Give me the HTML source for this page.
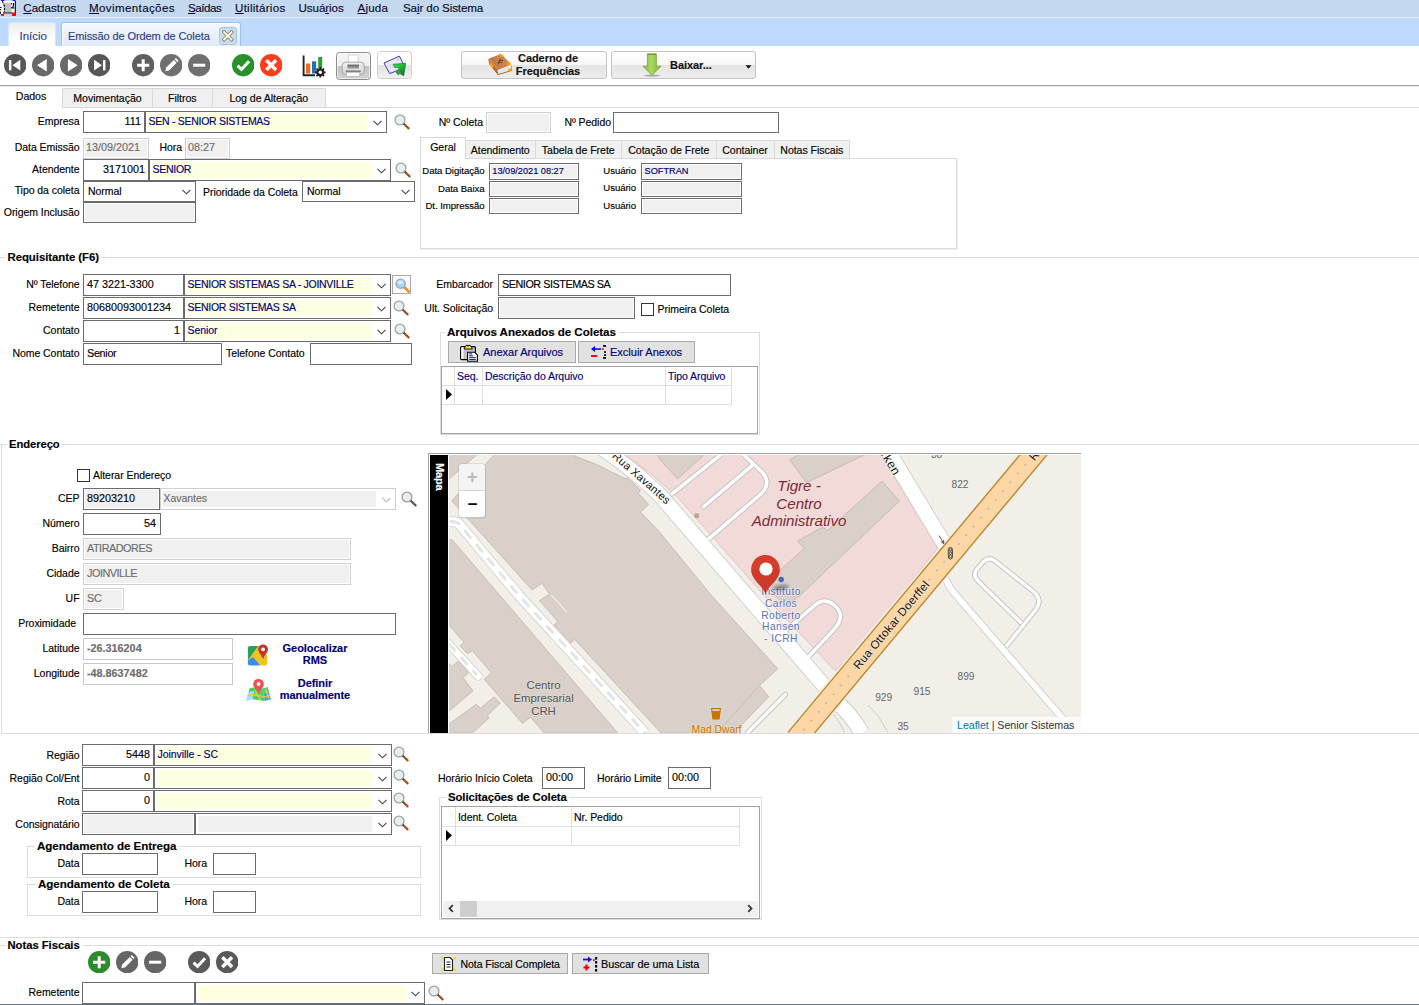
<!DOCTYPE html><html lang="pt-BR"><head><meta charset="utf-8"><title>Emissão de Ordem de Coleta</title><style>
*{box-sizing:border-box;margin:0;padding:0}
html,body{width:1419px;height:1005px;overflow:hidden;background:#fff}
body{position:relative;font-family:"Liberation Sans",sans-serif;font-size:10.5px;letter-spacing:-0.05px;-webkit-text-stroke:0.15px;color:#000;line-height:1}
.a{position:absolute;white-space:nowrap}
.l{position:absolute;white-space:nowrap;text-align:right;height:14px;line-height:14px}
.ll{position:absolute;white-space:nowrap;text-align:left;height:14px;line-height:14px}
.f{position:absolute;border:1px solid #6b6b6b;background:#fff;white-space:nowrap;overflow:hidden;padding:0 3px;font-size:10.8px;letter-spacing:0}
.f.d{border-color:#cfcfcf;background:#f0f0f0;color:#6d6d6d;box-shadow:inset 0 0 0 1px #fff}
.f.dd{background:#f0f0f0;box-shadow:inset 0 0 0 1px #fff}
.f.w{border-color:#c8c8c8;background:#fff;color:#6d6d6d;font-weight:bold}
.f.r{text-align:right}
.f.t{letter-spacing:-0.3px}
.cb{position:absolute;border:1px solid #6b6b6b;background:#fff;white-space:nowrap;overflow:hidden;font-size:10.5px;letter-spacing:-0.28px;color:#00007a}
.cb.lc{letter-spacing:-0.05px}
.cb .y{position:absolute;left:2px;top:2px;bottom:2px;right:19px;background:#ffffe1;padding-left:0.5px}
.cb.g{border-color:#cfcfcf}
.cb.g .y{background:#f0f0f0;color:#6d6d6d}
.cb.gd .y{background:#f0f0f0}
.cb.p .y{background:#fff;color:#000;padding-left:2px;padding-top:1px}
.cb svg{position:absolute;right:3.6px;width:9px;height:6px}
.b{font-weight:bold}
.hl{position:absolute;height:1px;background:#dcdcdc}
.vl{position:absolute;width:1px;background:#dcdcdc}
.gt{position:absolute;background:#fff;font-weight:bold;font-size:11px;padding:0 2px;height:6px;line-height:6px;white-space:nowrap}
.box{position:absolute;border:1px solid #dcdcdc}
.tab{position:absolute;background:#f0f0f0;border:1px solid #d9d9d9;text-align:center;white-space:nowrap}
.btn{position:absolute;background:#e1e1e1;border:1px solid #a8a8a8;white-space:nowrap}
.circ{position:absolute;width:22px;height:22px;border-radius:50%}
.chk{position:absolute;width:13px;height:13px;border:1px solid #333;background:#fff}
.nv{color:#00007a}
</style></head><body>
<div class="a" style="left:0;top:0;width:1419px;height:17px;background:#c4d9f0"></div>
<div class="a" style="left:0;top:17px;width:1419px;height:1px;background:#ebeef2"></div>
<div class="a" style="left:0;top:18px;width:1419px;height:28px;background:#bedaff"></div>
<svg class="a" style="left:0;top:0" width="17" height="17" viewBox="0 0 17 17"><rect x="0" y="1" width="15.6" height="13" fill="#fff"/><rect x="3.6" y="2.8" width="8" height="10" fill="#c0c0c0"/><path d="M15.3 1 V13.2 M3 13 H12.4 M0.3 11.5 V14" stroke="#000" stroke-width="1.1" fill="none"/><path d="M2.4 1.2 L3.4 3.5 L4.6 6.8 L4.4 12.2" stroke="#000" stroke-width="1.1" stroke-dasharray="2.2 1.3" fill="none"/><path d="M11.5 3.2 L11.6 11" stroke="#000" stroke-width="1" stroke-dasharray="1.1 2.9" fill="none"/><path d="M13.4 3 V5.4 L12.6 8 H14.5" stroke="#000" stroke-width="1.1" fill="none"/><path d="M0 7.4 H1.6 M0 9.6 H1.3" stroke="#000" stroke-width="1" fill="none"/><rect x="12" y="12.6" width="4" height="3.4" fill="#f00"/><rect x="1" y="14" width="3" height="1.8" fill="#f00"/><rect x="1" y="0" width="3.4" height="0.9" fill="#00f"/><rect x="12.6" y="0" width="3" height="0.9" fill="#00f"/></svg>
<div class="a" style="left:23.3px;top:1px;height:14px;line-height:14px;font-size:11.6px;letter-spacing:0px;color:#0a0a2a"><u>C</u>adastros</div>
<div class="a" style="left:89px;top:1px;height:14px;line-height:14px;font-size:11.6px;letter-spacing:0.36px;color:#0a0a2a"><u>M</u>ovimentações</div>
<div class="a" style="left:188px;top:1px;height:14px;line-height:14px;font-size:11.6px;letter-spacing:-0.48px;color:#0a0a2a"><u>S</u>aídas</div>
<div class="a" style="left:235px;top:1px;height:14px;line-height:14px;font-size:11.6px;letter-spacing:0.25px;color:#0a0a2a"><u>U</u>tilitários</div>
<div class="a" style="left:298.5px;top:1px;height:14px;line-height:14px;font-size:11.6px;letter-spacing:-0.08px;color:#0a0a2a">Usuá<u>r</u>ios</div>
<div class="a" style="left:357.5px;top:1px;height:14px;line-height:14px;font-size:11.6px;letter-spacing:0.2px;color:#0a0a2a"><u>A</u>juda</div>
<div class="a" style="left:403px;top:1px;height:14px;line-height:14px;font-size:11.6px;letter-spacing:-0.11px;color:#0a0a2a">Sa<u>i</u>r do Sistema</div>
<div class="a" style="left:8px;top:22px;width:48px;height:24px;border-radius:3px 3px 0 0;background:linear-gradient(#ececec,#fff 70%);border:1px solid #cfe6ff;border-bottom:none"></div>
<div class="a" style="left:19.5px;top:29px;font-size:11.6px;color:#2d3f8e;height:14px;line-height:14px">Início</div>
<div class="a" style="left:60.5px;top:22px;width:180px;height:24px;border-radius:3px 3px 0 0;background:linear-gradient(#f4f8fd,#dfe9f7);border:1px solid #9dbfee;border-bottom:none;box-shadow:inset 1px 1px 0 #fff"></div>
<div class="a" style="left:68px;top:29px;font-size:11px;color:#2d3f8e;height:14px;line-height:14px;letter-spacing:-0.1px">Emissão de Ordem de Coleta</div>
<div class="a" style="left:219px;top:27px;width:17.5px;height:18px;border-radius:3px;background:#cadcf4;border:1px solid #a9c4ea"></div>
<svg class="a" style="left:222px;top:30px" width="12" height="12" viewBox="0 0 12 12"><path d="M2 2 L9.6 9.6 M9.6 2 L2 9.6" stroke="#7a6a2a" stroke-width="3.3" stroke-linecap="square"/><path d="M2 2 L9.6 9.6 M9.6 2 L2 9.6" stroke="#fff" stroke-width="1.9" stroke-linecap="square"/></svg>
<svg class="a" style="left:3.8px;top:54.2px" width="22.4" height="22.4" viewBox="0 0 24 24"><circle cx="12" cy="12" r="12" fill="#575757"/><rect x="5.3" y="6.5" width="2.6" height="11" fill="#fff"/><path d="M17.5 6.2 L9 12 L17.5 17.8 Z" fill="#fff"/></svg>
<svg class="a" style="left:31.7px;top:54.2px" width="22.4" height="22.4" viewBox="0 0 24 24"><circle cx="12" cy="12" r="12" fill="#696969"/><path d="M15.8 5.3 L5.4 12 L15.8 18.7 Z" fill="#fff"/></svg>
<svg class="a" style="left:59.5px;top:54.2px" width="22.4" height="22.4" viewBox="0 0 24 24"><circle cx="12" cy="12" r="12" fill="#696969"/><path d="M8.5 5.3 L18.9 12 L8.5 18.7 Z" fill="#fff"/></svg>
<svg class="a" style="left:87.6px;top:54.2px" width="22.4" height="22.4" viewBox="0 0 24 24"><circle cx="12" cy="12" r="12" fill="#575757"/><rect x="16.1" y="6.5" width="2.6" height="11" fill="#fff"/><path d="M6.5 6.2 L15 12 L6.5 17.8 Z" fill="#fff"/></svg>
<svg class="a" style="left:131.6px;top:54.2px" width="22.4" height="22.4" viewBox="0 0 24 24"><circle cx="12" cy="12" r="12" fill="#5f5f5f"/><path d="M12 5.5 V18.5 M5.5 12 H18.5" stroke="#fff" stroke-width="3.2"/></svg>
<svg class="a" style="left:159.8px;top:54.2px" width="22.4" height="22.4" viewBox="0 0 24 24"><circle cx="12" cy="12" r="12" fill="#707070"/><path d="M5.6 18.6 L6.6 14.6 L14.9 6.3 L17.9 9.3 L9.6 17.6 Z" fill="#fff"/><path d="M15.7 5.5 L17 4.2 L20 7.2 L18.7 8.5 Z" fill="#fff"/></svg>
<svg class="a" style="left:187.7px;top:54.2px" width="22.4" height="22.4" viewBox="0 0 24 24"><circle cx="12" cy="12" r="12" fill="#707070"/><path d="M5.5 12 H18.5" stroke="#fff" stroke-width="3.2"/></svg>
<svg class="a" style="left:231.8px;top:54.2px" width="22.4" height="22.4" viewBox="0 0 24 24"><circle cx="12" cy="12" r="12" fill="#28922a"/><path d="M6 12.5 L10.2 16.5 L18.3 7.8" fill="none" stroke="#fff" stroke-width="3.2"/></svg>
<svg class="a" style="left:259.8px;top:54.2px" width="22.4" height="22.4" viewBox="0 0 24 24"><circle cx="12" cy="12" r="12" fill="#ff3c1c"/><path d="M6.8 6.8 L17.2 17.2 M17.2 6.8 L6.8 17.2" stroke="#fff" stroke-width="3.8"/></svg>
<svg class="a" style="left:302px;top:55px" width="25" height="23" viewBox="0 0 25 23"><path d="M1.6 0.5 V20.3 H13" fill="none" stroke="#262626" stroke-width="1.9"/><rect x="4" y="8.5" width="4.2" height="10" fill="#f26a1b"/><rect x="10" y="6.3" width="4.2" height="12.2" fill="#2a6ebb"/><rect x="16.2" y="2" width="4" height="12" fill="#2e9a3a"/><circle cx="18.3" cy="17.3" r="4.6" fill="#fff"/><circle cx="18.3" cy="17.3" r="3" fill="none" stroke="#222" stroke-width="2.2"/><g stroke="#222" stroke-width="1.7"><path d="M18.3 12 V22.6 M13 17.3 H23.6 M14.5 13.5 L22.1 21.1 M22.1 13.5 L14.5 21.1"/></g><circle cx="18.3" cy="17.3" r="1.7" fill="#fff"/></svg>
<div class="a" style="left:336px;top:52px;width:35px;height:28px;border:1px solid #8c8c8c;border-radius:3.5px;background:linear-gradient(#f4f4f4 0,#efefef 49%,#c4c4c4 51%,#d2d2d2 100%);box-shadow:inset 0 0 0 1px rgba(255,255,255,.55)"></div>
<svg class="a" style="left:340px;top:53px" width="27" height="26" viewBox="340 53 27 26"><defs><linearGradient id="gp" x1="0" x2="0" y1="0" y2="1"><stop offset="0" stop-color="#5e5e5e"/><stop offset="1" stop-color="#b5b5b5"/></linearGradient><linearGradient id="gb" x1="0" x2="0" y1="0" y2="1"><stop offset="0" stop-color="#f4f4f4"/><stop offset="1" stop-color="#d6d6d6"/></linearGradient></defs><rect x="348.3" y="55" width="9.8" height="10" fill="#fdfdfd" stroke="#c4c4c4" stroke-width=".7"/><rect x="342.2" y="62.2" width="22" height="12.2" rx="3.2" fill="url(#gb)" stroke="#9b9b9b" stroke-width=".9" opacity=".93"/><rect x="347.4" y="64.6" width="11.6" height="4.2" fill="url(#gp)"/><rect x="345.8" y="70.6" width="15" height="1.1" fill="#555"/><rect x="346.6" y="72.3" width="13.2" height="4.3" fill="#fbfbfb" stroke="#b0b0b0" stroke-width=".7"/><circle cx="362" cy="65" r=".6" fill="#8fbf6a"/></svg>
<div class="a" style="left:377px;top:51px;width:35px;height:28px;border:1px solid #cfcfcf;border-radius:3.5px;background:linear-gradient(#fff 0,#fafafa 49%,#e2e2e2 51%,#f0f0f0 100%)"></div>
<svg class="a" style="left:381px;top:53px" width="28" height="26" viewBox="381 53 28 26"><defs><linearGradient id="gs" x1="0" x2="1" y1="0" y2="1"><stop offset="0" stop-color="#3fe05a"/><stop offset=".55" stop-color="#1fae35"/><stop offset="1" stop-color="#0a5e18"/></linearGradient></defs><path d="M384 63 L399.4 56.1 L405 67.4 L389.7 73.6 Z" fill="#e9e9fb" stroke="#3b3bc4" stroke-width="1"/><circle cx="391.5" cy="66" r="1.7" fill="none" stroke="#c9c9d6" stroke-width=".7"/><rect x="397.3" y="58.6" width="1.6" height="1.6" fill="#b8c83a" transform="rotate(-24 398 59.4)"/><path d="M393.2 64.2 L405.7 63.3 L403.7 75.8 L400.4 73.9 L401.2 69.6 L398.6 74.9 L396 72.4 L399.8 67.6 L394.6 67.6 Z" fill="url(#gs)" stroke="#0b6a1c" stroke-width=".6" stroke-linejoin="round"/></svg>
<div class="a" style="left:461px;top:51px;width:145.5px;height:28px;border:1px solid #c4c4c4;border-radius:3px;background:linear-gradient(#fff 0,#f7f7f7 48%,#e4e4e4 52%,#ededed 100%)"></div>
<div class="a" style="left:611px;top:51px;width:145px;height:28px;border:1px solid #c4c4c4;border-radius:3px;background:linear-gradient(#fff 0,#f7f7f7 48%,#e4e4e4 52%,#ededed 100%)"></div>
<div class="a b" style="left:508px;top:51.5px;width:80px;text-align:center;font-size:11px;line-height:13.8px;color:#111;white-space:normal">Caderno de Frequências</div>
<svg class="a" style="left:486px;top:52px" width="28" height="25" viewBox="486 52 28 25"><path d="M489.6 64.3 L498 74.9 L511.8 70.9 L511.2 64.5 Z" fill="#a25f2e"/><path d="M497.3 70 L510.8 64.6 L511.3 70.2 L498.2 74 Z" fill="#f4f4f4"/><path d="M497.6 71.6 L511 66.6 M497.9 72.9 L511.2 68.4" stroke="#cfcfcf" stroke-width=".6"/><path d="M488.2 60.1 L496.9 69.7 L498 74.5 L489.4 64.6 Z" fill="#b06a38"/><path d="M488.2 60.1 Q488 59 489.2 58.6 L500 54.3 Q501 54 501.8 54.8 L511 64.1 L496.9 69.9 Z" fill="#c98250"/><path d="M490.5 58.2 L499.2 67.7 M492 57.6 L500.7 67.1" stroke="#a8653a" stroke-width=".6"/><path d="M498.4 54.8 L500.4 54.2 Q501.3 54 502 54.8 L504 56.9 Q501 57.5 498.4 54.8 Z" fill="#ff9a00"/><path d="M507.8 61 L511.2 64.2 L507 66 Q505.5 63 507.8 61 Z" fill="#ff9a00"/><path d="M490.3 62.3 L493.3 65.8 L492.6 68.4 L490 65.3 Z" fill="#ffa61a"/><path d="M508 69.6 L511.4 68 L511.8 70.8 L508.6 71.9 Z" fill="#ff9a00"/><text x="500.3" y="64.6" font-size="7.4" font-weight="bold" fill="#5e3114" text-anchor="middle" transform="rotate(22 500.3 62)" font-family="Liberation Sans, sans-serif">F</text></svg>
<div class="a b" style="left:670px;top:58px;font-size:11px;color:#111;height:14px;line-height:14px">Baixar...</div>
<svg class="a" style="left:640px;top:52px" width="24" height="26" viewBox="640 52 24 26"><defs><linearGradient id="ga" x1="0" x2="1" y1="0" y2="0"><stop offset="0" stop-color="#86bb35"/><stop offset=".45" stop-color="#a9d864"/><stop offset="1" stop-color="#7fb52d"/></linearGradient></defs><ellipse cx="652" cy="75.6" rx="8" ry="1" fill="#8a8a8a" opacity=".7"/><path d="M647.4 54 H656.4 V66.2 H661 L652 75.3 L643 66.2 H647.4 Z" fill="url(#ga)" stroke="#6f9f2a" stroke-width=".7"/><path d="M647.4 54.2 H656.4" stroke="#5d8a22" stroke-width="1"/></svg>
<svg class="a" style="left:744.5px;top:65px" width="7" height="4" viewBox="0 0 7 4"><path d="M0.5 0.3 H6.5 L3.5 3.7 Z" fill="#111"/></svg>
<div class="hl" style="left:0px;top:85px;width:1419px;background:#a3a3a3"></div>
<div class="hl" style="left:0px;top:86px;width:1419px;background:#e9e9e9"></div>
<div class="hl" style="left:62px;top:107px;width:1357px;background:#d9d9d9"></div>
<div class="tab" style="left:62px;top:88px;width:91px;height:20px;line-height:19px;font-size:10.6px">Movimentação</div>
<div class="tab" style="left:152px;top:88px;width:60.5px;height:20px;line-height:19px;font-size:10.6px">Filtros</div>
<div class="tab" style="left:211.5px;top:88px;width:114.5px;height:20px;line-height:19px;font-size:10.6px">Log de Alteração</div>
<div class="a" style="left:0;top:86px;width:62px;height:22px;text-align:center;line-height:21px;font-size:10.6px">Dados</div>
<div class="l " style="right:1339.5px;top:114.4px;">Empresa</div>
<div class="f r" style="left:83.0px;top:111.0px;width:62.0px;height:22.0px;line-height:18.0px;">111</div>
<div class="cb " style="left:145.0px;top:111.0px;width:242.0px;height:22.0px"><div class="y" style="line-height:14.8px">SEN - SENIOR SISTEMAS</div><svg viewBox="0 0 9 6" style="top:7.5px"><path d="M0.5 0.8 L4.5 4.8 L8.5 0.8" fill="none" stroke="#444" stroke-width="1.1"/></svg></div>
<svg class="a" style="left:394.0px;top:113.5px" width="17.0" height="17.0" viewBox="0 0 17 17"><line x1="9.5" y1="9.5" x2="14.6" y2="14.4" stroke="#a0521e" stroke-width="2.2" stroke-linecap="round"/><line x1="8.6" y1="8.6" x2="10.4" y2="10.4" stroke="#3a2a20" stroke-width="2"/><circle cx="6" cy="6" r="4.9" fill="#e9eded" stroke="#98a6a6" stroke-width="1.3"/></svg>
<div class="l " style="right:1339.5px;top:140.4px;">Data Emissão</div>
<div class="f d" style="left:83.0px;top:138.0px;width:66.0px;height:21.0px;line-height:17.0px;padding:0 2px">13/09/2021</div>
<div class="ll " style="left:159.5px;top:140.4px;">Hora</div>
<div class="f d" style="left:185.0px;top:138.0px;width:45.0px;height:21.0px;line-height:17.0px;padding:0 2px">08:27</div>
<div class="l " style="right:1339.5px;top:162.4px;">Atendente</div>
<div class="f r" style="left:83.0px;top:159.0px;width:66.0px;height:22.0px;line-height:18.0px;">3171001</div>
<div class="cb " style="left:149.0px;top:159.0px;width:242.0px;height:22.0px"><div class="y" style="line-height:14.8px">SENIOR</div><svg viewBox="0 0 9 6" style="top:7.5px"><path d="M0.5 0.8 L4.5 4.8 L8.5 0.8" fill="none" stroke="#444" stroke-width="1.1"/></svg></div>
<svg class="a" style="left:395.0px;top:161.5px" width="17.0" height="17.0" viewBox="0 0 17 17"><line x1="9.5" y1="9.5" x2="14.6" y2="14.4" stroke="#a0521e" stroke-width="2.2" stroke-linecap="round"/><line x1="8.6" y1="8.6" x2="10.4" y2="10.4" stroke="#3a2a20" stroke-width="2"/><circle cx="6" cy="6" r="4.9" fill="#e9eded" stroke="#98a6a6" stroke-width="1.3"/></svg>
<div class="l " style="right:1339.5px;top:182.9px;">Tipo da coleta</div>
<div class="cb p lc" style="left:83.0px;top:181.0px;width:113.0px;height:21.0px"><div class="y" style="line-height:13.8px">Normal</div><svg viewBox="0 0 9 6" style="top:7.0px"><path d="M0.5 0.8 L4.5 4.8 L8.5 0.8" fill="none" stroke="#444" stroke-width="1.1"/></svg></div>
<div class="ll " style="left:203.0px;top:185.4px;">Prioridade da Coleta</div>
<div class="cb p lc" style="left:302.0px;top:181.0px;width:113.0px;height:21.0px"><div class="y" style="line-height:13.8px">Normal</div><svg viewBox="0 0 9 6" style="top:7.0px"><path d="M0.5 0.8 L4.5 4.8 L8.5 0.8" fill="none" stroke="#444" stroke-width="1.1"/></svg></div>
<div class="l " style="right:1339.5px;top:204.9px;">Origem Inclusão</div>
<div class="f dd" style="left:83.0px;top:202.0px;width:113.0px;height:21.0px;line-height:17.0px;"></div>
<div class="l " style="right:936.0px;top:115.4px;">Nº Coleta</div>
<div class="f d" style="left:486.0px;top:112.0px;width:65.0px;height:21.0px;line-height:17.0px;"></div>
<div class="l " style="right:808.0px;top:115.4px;">Nº Pedido</div>
<div class="f " style="left:613.0px;top:112.0px;width:166.0px;height:21.0px;line-height:17.0px;"></div>
<div class="box" style="left:420px;top:158px;width:536.5px;height:90.5px;border-color:#dcdcdc;box-shadow:1px 1px 0 #f0f0f0"></div>
<div class="tab" style="left:465px;top:139.5px;width:70.5px;height:19.5px;line-height:18.5px;font-size:10.6px">Atendimento</div>
<div class="tab" style="left:534.5px;top:139.5px;width:87.5px;height:19.5px;line-height:18.5px;font-size:10.6px">Tabela de Frete</div>
<div class="tab" style="left:621px;top:139.5px;width:95.5px;height:19.5px;line-height:18.5px;font-size:10.6px">Cotação de Frete</div>
<div class="tab" style="left:715.5px;top:139.5px;width:59.0px;height:19.5px;line-height:18.5px;font-size:10.6px">Container</div>
<div class="tab" style="left:773.5px;top:139.5px;width:76.5px;height:19.5px;line-height:18.5px;font-size:10.6px">Notas Fiscais</div>
<div class="a" style="left:420px;top:137px;width:46px;height:22px;background:#fff;border:1px solid #d9d9d9;border-bottom:none;text-align:center;line-height:19px;font-size:10.6px">Geral</div>
<div class="l " style="right:934.5px;top:164.2px;font-size:9.6px">Data Digitação</div>
<div class="f dd nv" style="left:489.3px;top:163.0px;width:89.7px;height:16.5px;line-height:12.5px;font-size:9.2px;padding:0 2px;line-height:14.9px;">13/09/2021 08:27</div>
<div class="l " style="right:783.0px;top:163.7px;font-size:9.6px">Usuário</div>
<div class="f dd nv" style="left:641.0px;top:163.0px;width:101.0px;height:16.5px;line-height:12.5px;font-size:9.2px;padding:0 2.5px;line-height:14.9px;">SOFTRAN</div>
<div class="l " style="right:934.5px;top:181.8px;font-size:9.6px">Data Baixa</div>
<div class="f dd nv" style="left:489.3px;top:181.0px;width:89.7px;height:15.5px;line-height:11.5px;font-size:9.2px;padding:0 2px;line-height:13.9px;"></div>
<div class="l " style="right:783.0px;top:181.2px;font-size:9.6px">Usuário</div>
<div class="f dd nv" style="left:641.0px;top:181.0px;width:101.0px;height:15.5px;line-height:11.5px;font-size:9.2px;padding:0 2.5px;line-height:13.9px;"></div>
<div class="l " style="right:934.5px;top:199.4px;font-size:9.6px">Dt. Impressão</div>
<div class="f dd nv" style="left:489.3px;top:198.3px;width:89.7px;height:16.2px;line-height:12.2px;font-size:9.2px;padding:0 2px;line-height:14.6px;"></div>
<div class="l " style="right:783.0px;top:198.8px;font-size:9.6px">Usuário</div>
<div class="f dd nv" style="left:641.0px;top:198.3px;width:101.0px;height:16.2px;line-height:12.2px;font-size:9.2px;padding:0 2.5px;line-height:14.6px;"></div>
<div class="hl" style="left:0px;top:257px;width:1419px;background:#dcdcdc"></div>
<div class="gt" style="left:5.5px;top:254.0px;font-size:11.4px">Requisitante (F6)</div>
<div class="l " style="right:1339.5px;top:277.4px;">Nº Telefone</div>
<div class="f " style="left:83.0px;top:274.0px;width:101.0px;height:22.0px;line-height:18.0px;">47 3221-3300</div>
<div class="cb " style="left:184.0px;top:274.0px;width:207.0px;height:22.0px"><div class="y" style="line-height:14.8px">SENIOR SISTEMAS SA - JOINVILLE</div><svg viewBox="0 0 9 6" style="top:7.5px"><path d="M0.5 0.8 L4.5 4.8 L8.5 0.8" fill="none" stroke="#444" stroke-width="1.1"/></svg></div>
<div class="l " style="right:1339.5px;top:300.4px;">Remetente</div>
<div class="f " style="left:83.0px;top:297.0px;width:101.0px;height:22.0px;line-height:18.0px;">80680093001234</div>
<div class="cb " style="left:184.0px;top:297.0px;width:207.0px;height:22.0px"><div class="y" style="line-height:14.8px">SENIOR SISTEMAS SA</div><svg viewBox="0 0 9 6" style="top:7.5px"><path d="M0.5 0.8 L4.5 4.8 L8.5 0.8" fill="none" stroke="#444" stroke-width="1.1"/></svg></div>
<div class="l " style="right:1339.5px;top:323.4px;">Contato</div>
<div class="f r" style="left:83.0px;top:320.0px;width:101.0px;height:22.0px;line-height:18.0px;">1</div>
<div class="cb lc" style="left:184.0px;top:320.0px;width:207.0px;height:22.0px"><div class="y" style="line-height:14.8px">Senior</div><svg viewBox="0 0 9 6" style="top:7.5px"><path d="M0.5 0.8 L4.5 4.8 L8.5 0.8" fill="none" stroke="#444" stroke-width="1.1"/></svg></div>
<div class="a" style="left:392px;top:275px;width:19px;height:19px;border:1px solid #a9a9a9;background:#fafafa"></div>
<svg class="a" style="left:394.5px;top:277.5px" width="16" height="16" viewBox="0 0 17 17"><line x1="9.5" y1="9.5" x2="14.4" y2="14.2" stroke="#d8452a" stroke-width="2.6" stroke-linecap="round"/><line x1="9.8" y1="9.8" x2="14.2" y2="14" stroke="#ffc21a" stroke-width="1.3" stroke-linecap="round"/><circle cx="6" cy="6" r="4.9" fill="#a9d4fb" stroke="#8e9aa8" stroke-width="1.2"/><ellipse cx="5.6" cy="4.6" rx="3" ry="2" fill="#d6ecff"/></svg>
<svg class="a" style="left:392.7px;top:300.0px" width="17.0" height="17.0" viewBox="0 0 17 17"><line x1="9.5" y1="9.5" x2="14.6" y2="14.4" stroke="#a0521e" stroke-width="2.2" stroke-linecap="round"/><line x1="8.6" y1="8.6" x2="10.4" y2="10.4" stroke="#3a2a20" stroke-width="2"/><circle cx="6" cy="6" r="4.9" fill="#e9eded" stroke="#98a6a6" stroke-width="1.3"/></svg>
<svg class="a" style="left:393.5px;top:323.0px" width="17.0" height="17.0" viewBox="0 0 17 17"><line x1="9.5" y1="9.5" x2="14.6" y2="14.4" stroke="#a0521e" stroke-width="2.2" stroke-linecap="round"/><line x1="8.6" y1="8.6" x2="10.4" y2="10.4" stroke="#3a2a20" stroke-width="2"/><circle cx="6" cy="6" r="4.9" fill="#e9eded" stroke="#98a6a6" stroke-width="1.3"/></svg>
<div class="l " style="right:1339.5px;top:345.9px;">Nome Contato</div>
<div class="f t" style="left:83.0px;top:343.0px;width:139.0px;height:22.0px;line-height:18.0px;">Senior</div>
<div class="ll " style="left:226.0px;top:345.9px;">Telefone Contato</div>
<div class="f " style="left:310.0px;top:343.0px;width:102.0px;height:22.0px;line-height:18.0px;"></div>
<div class="l " style="right:926.0px;top:277.4px;">Embarcador</div>
<div class="f t" style="left:498.0px;top:274.0px;width:233.0px;height:22.0px;line-height:18.0px;letter-spacing:-0.45px">SENIOR SISTEMAS SA</div>
<div class="l " style="right:926.0px;top:301.4px;">Ult. Solicitação</div>
<div class="f dd" style="left:498.0px;top:297.0px;width:137.0px;height:22.0px;line-height:18.0px;"></div>
<div class="chk" style="left:641px;top:303px"></div>
<div class="ll " style="left:657.5px;top:302.4px;">Primeira Coleta</div>
<div class="box" style="left:440px;top:332px;width:319.5px;height:102.5px"></div>
<div class="gt" style="left:445.0px;top:329.0px;font-size:11.6px">Arquivos Anexados de Coletas</div>
<div class="btn" style="left:448px;top:341px;width:127.5px;height:21.5px"></div>
<div class="btn" style="left:577.5px;top:341px;width:117px;height:21.5px"></div>
<div class="a nv" style="left:483px;top:345px;height:14px;line-height:14px;font-size:11.1px">Anexar Arquivos</div>
<div class="a nv" style="left:610px;top:345px;height:14px;line-height:14px;font-size:11.1px">Excluir Anexos</div>
<svg class="a" style="left:459px;top:343px" width="20" height="20" viewBox="459 343 20 20"><rect x="460.6" y="346.6" width="14.8" height="13" rx="1" fill="#c2c2c2" stroke="#000" stroke-width="1.1"/><rect x="461.3" y="347.4" width="2.2" height="11.4" fill="#fff"/><path d="M464 349 L466 345.4 H470.4 L472.4 349 Z" fill="#ffee00" stroke="#000" stroke-width=".9"/><rect x="467.2" y="346" width="1.8" height="1" fill="#8a8a8a"/><path d="M467.6 352.2 H474.6 L477.4 355 V361.3 H467.6 Z" fill="#fff" stroke="#000" stroke-width="1.1"/><path d="M469.2 353.9 H472 M469.2 355.8 H473 M469.2 357.7 H475.8 M469.2 359.6 H475.8" stroke="#0000ff" stroke-width="1"/></svg>
<svg class="a" style="left:590px;top:344px" width="18" height="17" viewBox="590 344 18 17"><path d="M591 349 L595 346.1 V351.9 Z" fill="#0000ff"/><rect x="593.5" y="348.3" width="7.6" height="1.5" fill="#0000ff"/><rect x="602" y="348.3" width="1.9" height="1.5" fill="#f00"/><rect x="591" y="355" width="6" height="2" fill="#f00"/><rect x="603" y="345.1" width="3" height="1.7" fill="#000"/><rect x="604.1" y="351.2" width="1.9" height="1.7" fill="#000"/><rect x="604.1" y="354.2" width="1.9" height="1.7" fill="#000"/><rect x="603" y="357.1" width="3" height="1.7" fill="#000"/></svg>
<div class="a" style="left:441px;top:366px;width:317px;height:68px;border:1px solid #a3a3a3;background:#fff"></div>
<div class="hl" style="left:442px;top:385px;width:290px;background:#dedede"></div>
<div class="hl" style="left:442px;top:404px;width:290px;background:#dedede"></div>
<div class="vl" style="left:454px;top:367px;height:38px;background:#dedede"></div>
<div class="vl" style="left:482px;top:367px;height:38px;background:#dedede"></div>
<div class="vl" style="left:665px;top:367px;height:38px;background:#dedede"></div>
<div class="vl" style="left:731px;top:367px;height:38px;background:#dedede"></div>
<div class="a nv" style="left:457px;top:368.6px;height:14px;line-height:14px">Seq.</div>
<div class="a nv" style="left:485px;top:368.6px;height:14px;line-height:14px">Descrição do Arquivo</div>
<div class="a nv" style="left:668px;top:368.6px;height:14px;line-height:14px">Tipo Arquivo</div>
<svg class="a" style="left:445.5px;top:389px" width="6" height="11" viewBox="0 0 6 11"><path d="M0 0 L6 5.5 L0 11 Z" fill="#000"/></svg>
<div class="hl" style="left:0px;top:444px;width:1419px;background:#dcdcdc"></div>
<div class="vl" style="left:1px;top:444px;height:290px;background:#dcdcdc"></div>
<div class="hl" style="left:1px;top:733px;width:1418px;background:#dcdcdc"></div>
<div class="gt" style="left:7.0px;top:441.0px;font-size:11.2px">Endereço</div>
<div class="chk" style="left:77px;top:469px"></div>
<div class="ll " style="left:93.0px;top:467.9px;">Alterar Endereço</div>
<div class="l " style="right:1339.5px;top:490.9px;">CEP</div>
<div class="f dd" style="left:83.0px;top:488.0px;width:77.0px;height:22.0px;line-height:18.0px;">89203210</div>
<div class="cb g lc" style="left:160.0px;top:488.0px;width:236.0px;height:22.0px"><div class="y" style="line-height:14.8px">Xavantes</div><svg viewBox="0 0 9 6" style="top:7.5px"><path d="M0.5 0.8 L4.5 4.8 L8.5 0.8" fill="none" stroke="#b4b4b4" stroke-width="1.1"/></svg></div>
<svg class="a" style="left:400.6px;top:490.8px" width="17.0" height="17.0" viewBox="0 0 17 17"><line x1="9.5" y1="9.5" x2="14.6" y2="14.4" stroke="#5a5a5a" stroke-width="2.2" stroke-linecap="round"/><line x1="8.6" y1="8.6" x2="10.4" y2="10.4" stroke="#3c3c3c" stroke-width="2"/><circle cx="6" cy="6" r="4.9" fill="#ededed" stroke="#9c9c9c" stroke-width="1.3"/></svg>
<div class="l " style="right:1339.5px;top:515.9px;">Número</div>
<div class="f r" style="left:83.0px;top:513.0px;width:78.0px;height:22.0px;line-height:18.0px;padding-right:4px">54</div>
<div class="l " style="right:1339.5px;top:540.9px;">Bairro</div>
<div class="f d t" style="left:83.0px;top:538.0px;width:268.0px;height:22.0px;line-height:18.0px;letter-spacing:-0.45px">ATIRADORES</div>
<div class="l " style="right:1339.5px;top:565.9px;">Cidade</div>
<div class="f d t" style="left:83.0px;top:563.0px;width:268.0px;height:22.0px;line-height:18.0px;letter-spacing:-0.45px">JOINVILLE</div>
<div class="l " style="right:1339.5px;top:590.9px;">UF</div>
<div class="f d t" style="left:83.0px;top:588.0px;width:41.0px;height:22.0px;line-height:18.0px;">SC</div>
<div class="l " style="right:1343.0px;top:615.9px;">Proximidade</div>
<div class="f " style="left:83.0px;top:613.0px;width:313.0px;height:22.0px;line-height:18.0px;"></div>
<div class="l " style="right:1339.5px;top:640.9px;">Latitude</div>
<div class="f w" style="left:83.0px;top:638.0px;width:150.0px;height:22.0px;line-height:18.0px;">-26.316204</div>
<div class="l " style="right:1339.5px;top:665.9px;">Longitude</div>
<div class="f w" style="left:83.0px;top:663.0px;width:150.0px;height:22.0px;line-height:18.0px;">-48.8637482</div>
<div class="a b" style="left:275px;top:643px;width:80px;text-align:center;font-size:11px;line-height:11.8px;color:#00007a;white-space:normal">Geolocalizar RMS</div>
<div class="a b" style="left:270px;top:678px;width:90px;text-align:center;font-size:11px;line-height:11.8px;color:#00007a;white-space:normal">Definir manualmente</div>
<svg class="a" style="left:247px;top:643px" width="23" height="24" viewBox="247 643 23 24"><path d="M247.9 660.2 L258.4 646 H262 V658 L253.2 656.8 Z" fill="#f0c419"/><path d="M247.9 648 Q247.9 646 250 646 H258.4 L247.9 660.2 Z" fill="#2e9e57"/><path d="M247.9 660.2 L253.2 656.8 L260.6 665.6 H250 Q247.9 665.6 247.9 663.6 Z" fill="#3a8fe0"/><path d="M253.2 656.8 L258.4 650.5 L262.9 658.5 L267.1 653.5 V663.6 Q267.1 665.6 265 665.6 H260.6 Z" fill="#f0c419"/><path d="M263.1 644.4 C260 644.4 258.2 646.6 258.2 649.3 C258.2 652.6 261.4 654.8 263.1 659.3 C264.8 654.8 268 652.6 268 649.3 C268 646.6 266.2 644.4 263.1 644.4 Z" fill="#c0392b"/><circle cx="263.1" cy="649.3" r="1.9" fill="#fff"/></svg>
<svg class="a" style="left:245px;top:677px" width="28" height="26" viewBox="245 677 28 26"><path d="M246 701 L249.5 688.5 L254.5 687.2 L252.5 699.2 Z" fill="#9fe0fa"/><path d="M249.5 688.5 L254.5 687.2 L253.9 691 L248.6 692 Z" fill="#4cc96a"/><path d="M252.5 699.2 L254.5 687.2 L262.8 688.6 L264.5 701 Z" fill="#4ed164"/><path d="M264.5 701 L262.8 688.6 L267.6 687.2 L271 699.4 Z" fill="#3fa9e8"/><path d="M262.8 688.6 L267.6 687.2 L269 692.4 L263.6 694 Z" fill="#58d06e"/><path d="M247.5 694.6 L253.2 693.6 L264 696.2 L270 694.4 L270.4 695.8 L264 697.8 L253.2 695.2 L247.1 696.2 Z" fill="#f2c53d"/><path d="M255.5 690 L261 700.2 L259.6 700.6 L254.4 690.6 Z M266.2 689 L269.8 698.6 L268.6 699 L265 689.6 Z" fill="#f2c53d"/><path d="M258.5 679 C255 679 253.2 681.4 253.2 684.2 C253.2 687.6 256.8 689.6 258.5 693.4 C260.2 689.6 263.8 687.6 263.8 684.2 C263.8 681.4 262 679 258.5 679 Z" fill="#f25050"/><circle cx="258.5" cy="684" r="1.9" fill="#fff"/></svg>
<div class="a" style="left:428px;top:453px;width:653px;height:280px;background:#fff;border-left:1px solid #a3a3a3;border-top:1px solid #a3a3a3"></div>
<div class="a" style="left:430px;top:455px;width:18px;height:278px;background:#000"></div>
<div class="a b" style="left:430px;top:463.3px;width:18px;height:30px;color:#fff;font-size:11px;letter-spacing:-0.2px;writing-mode:vertical-rl;line-height:17px;text-align:left">Mapa</div>
<svg class="a" style="left:449px;top:455px" width="632" height="278" viewBox="449 455 632 278" font-family="Liberation Sans, sans-serif">
<rect x="448" y="454" width="633" height="279" fill="#f2efe9"/>
<path d="M624 454 L880.5 454 L938 547.7 L870 634 L835.3 671 L761 592 L677 496.5 L650 473 Z" fill="#f2dad9" stroke="#e3c3c2" stroke-width="1"/>
<path d="M448 454 L477.6 454 L448 480 Z" fill="#d9d0c9" stroke="#c6b8ad" stroke-width="0.9"/>
<path d="M495 454 L569.2 454 L596.5 464.4 L625.3 478.8 L626.8 477.3 L640.5 490.2 L638.2 493.2 L648.8 504.5 L640.5 512.1 L660 532.6 L711 595 L777.7 668.8 L759.5 685.5 L768.6 696.8 L733.8 733 L661 733 L574.5 639.2 L571 643 L554 625 L557.9 621.8 L539.7 600.6 L549.5 594 L542 583.3 L532 590 L451.8 500.8 Z" fill="#d9d0c9" stroke="#c6b8ad" stroke-width="0.9"/>
<path d="M759.5 685.5 L717 733" stroke="#c6b8ad" stroke-width="0.9" fill="none"/>
<path d="M448 541 L451.8 539.4 L617.7 733 L544.2 733 L530.6 717.3 L522.3 723.3 L484.4 679.4 L491.2 672.6 L472.3 650.6 L467.7 653.6 L460 646 L464 642.3 L448 624 Z" fill="#d9d0c9" stroke="#c6b8ad" stroke-width="0.9"/>
<path d="M448 662.7 L451.8 666.5 L459.4 660.5 L468.5 672.6 L463.2 677.9 L473 690.8 L448 712 Z" fill="#d9d0c9" stroke="#c6b8ad" stroke-width="0.9"/>
<path d="M448 724.8 L476 704.4 L480.6 708.2 L494.2 696.8 L500.3 702.9 L487.4 715.8 L489 718 L472.3 733 L448 733 Z" fill="#d9d0c9" stroke="#c6b8ad" stroke-width="0.9"/>
<path d="M658 454 L705 454 L677.7 478.8 L659.5 459 Z" fill="#d9d0c9" stroke="#c6b8ad" stroke-width="0.9"/>
<path d="M789.8 459.8 L800 454 L866.4 454 L806.5 482.6 Z" fill="#d9d0c9" stroke="#c6b8ad" stroke-width="0.9"/>
<path d="M882 481.2 L899.5 501 L800.5 595 L786 606 L770 590 L780.8 569.7 L804.2 548.5 L797.4 541 L822.4 527.3 L827.7 530.3 Z" fill="#d9d0c9" stroke="#c6b8ad" stroke-width="0.9"/>
<path d="M671 494.7 L721.7 454" fill="none" stroke="#c4c4c4" stroke-width="5.4" stroke-linecap="butt" stroke-linejoin="round"/>
<path d="M708 539.4 L761 494 Q772 483 762 472 L742.9 454" fill="none" stroke="#c4c4c4" stroke-width="5.4" stroke-linecap="butt" stroke-linejoin="round"/>
<path d="M753.5 464.4 L703.5 506.8" fill="none" stroke="#c4c4c4" stroke-width="5.4" stroke-linecap="round" stroke-linejoin="round"/>
<path d="M808 657.4 L835.3 627.9 Q846 615 834 605 Q825 597 815 605 L785.3 631" fill="none" stroke="#c4c4c4" stroke-width="5.4" stroke-linecap="butt" stroke-linejoin="round"/>
<path d="M785.3 694.5 L747.4 733" fill="none" stroke="#c4c4c4" stroke-width="5.4" stroke-linecap="round" stroke-linejoin="round"/>
<path d="M1006 646.6 L1035.5 610 Q1043 600 1034 592 L995 561 Q989 556 983 562 L977 569 Q972 575 978 581 L1021.6 623.3" fill="none" stroke="#c4c4c4" stroke-width="5.4" stroke-linecap="butt" stroke-linejoin="round"/>
<path d="M448 521.2 L455 522 Q458 522.5 460 525 L518.5 595 L645 733" fill="none" stroke="#d0d0d0" stroke-width="10.799999999999999" stroke-linecap="butt" stroke-linejoin="round"/>
<path d="M448 643 L478.3 676.4" fill="none" stroke="#d0d0d0" stroke-width="8.6" stroke-linecap="round" stroke-linejoin="round"/>
<path d="M590 440 Q630 466 660.3 495.5 L742.5 591 L826 688" fill="none" stroke="#c8c8c8" stroke-width="16.1" stroke-linecap="butt" stroke-linejoin="round"/>
<path d="M838 703 Q852 716 862 733" fill="none" stroke="#c8c8c8" stroke-width="16.1" stroke-linecap="butt" stroke-linejoin="round"/>
<path d="M889.4 453 L944.5 544.6" fill="none" stroke="#c8c8c8" stroke-width="16.1" stroke-linecap="butt" stroke-linejoin="round"/>
<path d="M944 576 L951.5 590 L1077 735" fill="none" stroke="#c8c8c8" stroke-width="7.6" stroke-linecap="butt" stroke-linejoin="round"/>
<path d="M671 494.7 L721.7 454" fill="none" stroke="#fff" stroke-width="3.4" stroke-linecap="butt" stroke-linejoin="round"/>
<path d="M708 539.4 L761 494 Q772 483 762 472 L742.9 454" fill="none" stroke="#fff" stroke-width="3.4" stroke-linecap="butt" stroke-linejoin="round"/>
<path d="M753.5 464.4 L703.5 506.8" fill="none" stroke="#fff" stroke-width="3.4" stroke-linecap="round" stroke-linejoin="round"/>
<path d="M808 657.4 L835.3 627.9 Q846 615 834 605 Q825 597 815 605 L785.3 631" fill="none" stroke="#fff" stroke-width="3.4" stroke-linecap="butt" stroke-linejoin="round"/>
<path d="M785.3 694.5 L747.4 733" fill="none" stroke="#fff" stroke-width="3.4" stroke-linecap="round" stroke-linejoin="round"/>
<path d="M1006 646.6 L1035.5 610 Q1043 600 1034 592 L995 561 Q989 556 983 562 L977 569 Q972 575 978 581 L1021.6 623.3" fill="none" stroke="#fff" stroke-width="3.4" stroke-linecap="butt" stroke-linejoin="round"/>
<path d="M448 521.2 L455 522 Q458 522.5 460 525 L518.5 595 L645 733" fill="none" stroke="#fff" stroke-width="9.2" stroke-linecap="butt" stroke-linejoin="round"/>
<path d="M448 643 L478.3 676.4" fill="none" stroke="#fff" stroke-width="7" stroke-linecap="round" stroke-linejoin="round"/>
<path d="M590 440 Q630 466 660.3 495.5 L742.5 591 L826 688" fill="none" stroke="#fff" stroke-width="14.5" stroke-linecap="butt" stroke-linejoin="round"/>
<path d="M838 703 Q852 716 862 733" fill="none" stroke="#fff" stroke-width="14.5" stroke-linecap="butt" stroke-linejoin="round"/>
<path d="M889.4 453 L944.5 544.6" fill="none" stroke="#fff" stroke-width="14.5" stroke-linecap="butt" stroke-linejoin="round"/>
<path d="M944 576 L951.5 590 L1077 735" fill="none" stroke="#fff" stroke-width="6" stroke-linecap="butt" stroke-linejoin="round"/>
<path d="M448 521.2 L455 522 Q458 522.5 460 525 L518.5 595 L645 733" fill="none" stroke="#e4e4e4" stroke-width="3" stroke-dasharray="8 10" stroke-dashoffset="-3" stroke-linecap="round"/>
<path d="M448 643 L476 674" fill="none" stroke="#e4e4e4" stroke-width="3" stroke-dasharray="8 10" stroke-dashoffset="-2" stroke-linecap="round"/>
<path d="M551 594.5 L567 612.5" stroke="#fff" stroke-width="1" fill="none"/>
<path d="M832 712 Q840 722 845 733 M868 705 Q880 716 888 733" stroke="#c4c4c4" stroke-width="0.8" fill="none"/>
<path d="M1040 447 L796 739" fill="none" stroke="#f2efe9" stroke-width="25.4"/>
<path d="M1040 447 L796 739" fill="none" stroke="#b78a30" stroke-width="22.2"/>
<path d="M1040 447 L796 739" fill="none" stroke="#fcd6a4" stroke-width="19.4"/>
<path d="M1040 447 L796 739" fill="none" stroke="#bda9c6" stroke-width="1.8" stroke-dasharray="0.1 11.4" stroke-linecap="round"/>
<rect x="694.5" y="513.5" width="4.4" height="4.4" fill="#b5a699"/>
<g fill="none" stroke="#444" stroke-width="0.9"><rect x="948.3" y="547.5" width="4.2" height="11.5" rx="2"/><circle cx="950.4" cy="550" r="1.3"/><circle cx="950.4" cy="553.2" r="1.3"/><circle cx="950.4" cy="556.4" r="1.3"/><path d="M939 535.5 L943.8 543.5 M943.8 543.5 L943.6 540 M943.8 543.5 L940.9 541.8"/></g>
<text x="799" y="490.5" font-size="15.2" text-anchor="middle" fill="#7b2b35" stroke="#f2dad9" stroke-opacity="0.6" stroke-width="1.2" paint-order="stroke" stroke-linejoin="round" font-style="italic">Tigre -</text>
<text x="799" y="508.5" font-size="15.2" text-anchor="middle" fill="#7b2b35" stroke="#f2dad9" stroke-opacity="0.6" stroke-width="1.2" paint-order="stroke" stroke-linejoin="round" font-style="italic">Centro</text>
<text x="799" y="526" font-size="15.2" text-anchor="middle" fill="#7b2b35" stroke="#f2dad9" stroke-opacity="0.6" stroke-width="1.2" paint-order="stroke" stroke-linejoin="round" font-style="italic">Administrativo</text>
<text x="543.5" y="688.5" font-size="11.4" text-anchor="middle" fill="#555" stroke="#e4ddd7" stroke-opacity="0.7" stroke-width="1.5" paint-order="stroke" stroke-linejoin="round" >Centro</text>
<text x="543.5" y="701.5" font-size="11.4" text-anchor="middle" fill="#555" stroke="#e4ddd7" stroke-opacity="0.7" stroke-width="1.5" paint-order="stroke" stroke-linejoin="round" >Empresarial</text>
<text x="543.5" y="714.5" font-size="11.4" text-anchor="middle" fill="#555" stroke="#e4ddd7" stroke-opacity="0.7" stroke-width="1.5" paint-order="stroke" stroke-linejoin="round" >CRH</text>
<text x="960" y="488" font-size="10.2" text-anchor="middle" fill="#666" stroke="#f2efe9" stroke-opacity="0.7" stroke-width="1.2" paint-order="stroke" stroke-linejoin="round" >822</text>
<text x="966" y="679.5" font-size="10.2" text-anchor="middle" fill="#666" stroke="#f2efe9" stroke-opacity="0.7" stroke-width="1.2" paint-order="stroke" stroke-linejoin="round" >899</text>
<text x="922" y="694.5" font-size="10.2" text-anchor="middle" fill="#666" stroke="#f2efe9" stroke-opacity="0.7" stroke-width="1.2" paint-order="stroke" stroke-linejoin="round" >915</text>
<text x="883.6" y="700.5" font-size="10.2" text-anchor="middle" fill="#666" stroke="#f2efe9" stroke-opacity="0.7" stroke-width="1.2" paint-order="stroke" stroke-linejoin="round" >929</text>
<text x="903" y="729.5" font-size="10.2" text-anchor="middle" fill="#666" stroke="#f2efe9" stroke-opacity="0.7" stroke-width="1.2" paint-order="stroke" stroke-linejoin="round" >35</text>
<text x="936.5" y="457.5" font-size="10.2" text-anchor="middle" fill="#666" stroke="#f2efe9" stroke-opacity="0.7" stroke-width="1.2" paint-order="stroke" stroke-linejoin="round" >38</text>
<g transform="translate(891.5 625) rotate(-50.1)">
<text x="0" y="3.8" font-size="11.6" text-anchor="middle" fill="#111" stroke="#fde5c3" stroke-opacity="0.9" stroke-width="1.8" paint-order="stroke" stroke-linejoin="round" letter-spacing="0.25">Rua Ottokar Doerffel</text>
</g><g transform="translate(1031.5 459) rotate(-50.1)">
<text x="0" y="3.8" font-size="11.6" text-anchor="start" fill="#111" stroke="#fde5c3" stroke-opacity="0.9" stroke-width="1.8" paint-order="stroke" stroke-linejoin="round" letter-spacing="0.25">Rua Ottokar Doerffel</text>
</g><g transform="translate(641.5 478) rotate(41)">
<text x="0" y="3.8" font-size="11.2" text-anchor="middle" fill="#111" stroke="#fff" stroke-opacity="0.8" stroke-width="1.5" paint-order="stroke" stroke-linejoin="round" letter-spacing="0.2">Rua Xavantes</text>
</g><g transform="translate(897.5 474) rotate(58.5)">
<text x="0" y="4.2" font-size="12.6" text-anchor="end" fill="#111" stroke="#fff" stroke-opacity="0.8" stroke-width="1.5" paint-order="stroke" stroke-linejoin="round" letter-spacing="0.3">Birken</text>
</g>
<path d="M711 708 H721 L719.6 719.5 H712.4 Z" fill="#c77400"/><rect x="712.4" y="709.3" width="7.2" height="1.5" fill="#f5e6cf"/>
<text x="716.5" y="732.6" font-size="10.4" text-anchor="middle" fill="#c77400" stroke="#e8e0d8" stroke-opacity="0.8" stroke-width="1.5" paint-order="stroke" stroke-linejoin="round" >Mad Dwarf</text>
<circle cx="781.2" cy="579.5" r="2.7" fill="#4a64b4"/>
<text x="781" y="594.8" font-size="10.3" text-anchor="middle" fill="#5c72b4" stroke="#fff" stroke-opacity="0.55" stroke-width="1.5" paint-order="stroke" stroke-linejoin="round" letter-spacing="0.4">Instituto</text>
<text x="781" y="606.8" font-size="10.3" text-anchor="middle" fill="#5c72b4" stroke="#fff" stroke-opacity="0.55" stroke-width="1.5" paint-order="stroke" stroke-linejoin="round" letter-spacing="0.4">Carlos</text>
<text x="781" y="618.6" font-size="10.3" text-anchor="middle" fill="#5c72b4" stroke="#fff" stroke-opacity="0.55" stroke-width="1.5" paint-order="stroke" stroke-linejoin="round" letter-spacing="0.4">Roberto</text>
<text x="781" y="630.4" font-size="10.3" text-anchor="middle" fill="#5c72b4" stroke="#fff" stroke-opacity="0.55" stroke-width="1.5" paint-order="stroke" stroke-linejoin="round" letter-spacing="0.4">Hansen</text>
<text x="781" y="642.4" font-size="10.3" text-anchor="middle" fill="#5c72b4" stroke="#fff" stroke-opacity="0.55" stroke-width="1.5" paint-order="stroke" stroke-linejoin="round" letter-spacing="0.4">- ICRH</text>
<defs><filter id="bl" x="-50%" y="-100%" width="200%" height="300%"><feGaussianBlur stdDeviation="1.6"/></filter></defs><ellipse cx="781" cy="587.5" rx="8" ry="2.6" fill="#000" opacity=".38" filter="url(#bl)" transform="rotate(-8 780 587.5)"/>
<path d="M765.5 594.5 C763 585 751.2 580.5 751.2 569.2 C751.2 561.2 757.6 554.9 765.5 554.9 C773.4 554.9 779.8 561.2 779.8 569.2 C779.8 580.5 768 585 765.5 594.5 Z" fill="#d63e2a"/>
<path d="M765.5 594.5 C763 585 751.2 580.5 751.2 569.2 L779.8 569.2 C779.8 580.5 768 585 765.5 594.5 Z" fill="#c8382a" opacity=".6"/>
<circle cx="766" cy="569" r="6.6" fill="#fff"/>
<rect x="952.3" y="717" width="129" height="16" fill="#fff" opacity=".75"/>
<text x="957" y="728.8" font-size="10.7" fill="#333"><tspan fill="#0078a8">Leaflet</tspan> | Senior Sistemas</text>
<rect x="458.4" y="463.6" width="27.4" height="54.6" rx="4" fill="#000" opacity=".16"/>
<rect x="459" y="464" width="26" height="53.2" rx="3.5" fill="#fff"/>
<path d="M459 490.3 V467.5 Q459 464 462.5 464 H481.5 Q485 464 485 467.5 V490.3 Z" fill="#f4f4f4"/>
<rect x="459" y="490" width="26" height="0.8" fill="#ccc"/>
<text x="472.2" y="483.2" font-size="18" font-weight="bold" text-anchor="middle" fill="#bbb">+</text>
<text x="472.6" y="510.2" font-size="17" font-weight="bold" text-anchor="middle" fill="#000">−</text>
</svg>
<div class="l " style="right:1339.5px;top:747.9px;">Região</div>
<div class="f r" style="left:82.0px;top:744.0px;width:72.0px;height:22.0px;line-height:18.0px;">5448</div>
<div class="cb lc" style="left:154.0px;top:744.0px;width:238.0px;height:22.0px"><div class="y" style="line-height:14.8px">Joinville - SC</div><svg viewBox="0 0 9 6" style="top:7.5px"><path d="M0.5 0.8 L4.5 4.8 L8.5 0.8" fill="none" stroke="#444" stroke-width="1.1"/></svg></div>
<svg class="a" style="left:393.0px;top:745.5px" width="17.0" height="17.0" viewBox="0 0 17 17"><line x1="9.5" y1="9.5" x2="14.6" y2="14.4" stroke="#a0521e" stroke-width="2.2" stroke-linecap="round"/><line x1="8.6" y1="8.6" x2="10.4" y2="10.4" stroke="#3a2a20" stroke-width="2"/><circle cx="6" cy="6" r="4.9" fill="#e9eded" stroke="#98a6a6" stroke-width="1.3"/></svg>
<div class="l " style="right:1339.5px;top:770.9px;">Região Col/Ent</div>
<div class="f r" style="left:82.0px;top:767.0px;width:72.0px;height:22.0px;line-height:18.0px;">0</div>
<div class="cb lc" style="left:154.0px;top:767.0px;width:238.0px;height:22.0px"><div class="y" style="line-height:14.8px"></div><svg viewBox="0 0 9 6" style="top:7.5px"><path d="M0.5 0.8 L4.5 4.8 L8.5 0.8" fill="none" stroke="#444" stroke-width="1.1"/></svg></div>
<svg class="a" style="left:393.0px;top:768.5px" width="17.0" height="17.0" viewBox="0 0 17 17"><line x1="9.5" y1="9.5" x2="14.6" y2="14.4" stroke="#a0521e" stroke-width="2.2" stroke-linecap="round"/><line x1="8.6" y1="8.6" x2="10.4" y2="10.4" stroke="#3a2a20" stroke-width="2"/><circle cx="6" cy="6" r="4.9" fill="#e9eded" stroke="#98a6a6" stroke-width="1.3"/></svg>
<div class="l " style="right:1339.5px;top:793.9px;">Rota</div>
<div class="f r" style="left:82.0px;top:790.0px;width:72.0px;height:22.0px;line-height:18.0px;">0</div>
<div class="cb lc" style="left:154.0px;top:790.0px;width:238.0px;height:22.0px"><div class="y" style="line-height:14.8px"></div><svg viewBox="0 0 9 6" style="top:7.5px"><path d="M0.5 0.8 L4.5 4.8 L8.5 0.8" fill="none" stroke="#444" stroke-width="1.1"/></svg></div>
<svg class="a" style="left:393.0px;top:791.5px" width="17.0" height="17.0" viewBox="0 0 17 17"><line x1="9.5" y1="9.5" x2="14.6" y2="14.4" stroke="#a0521e" stroke-width="2.2" stroke-linecap="round"/><line x1="8.6" y1="8.6" x2="10.4" y2="10.4" stroke="#3a2a20" stroke-width="2"/><circle cx="6" cy="6" r="4.9" fill="#e9eded" stroke="#98a6a6" stroke-width="1.3"/></svg>
<div class="l " style="right:1339.5px;top:816.9px;">Consignatário</div>
<div class="f dd" style="left:82.0px;top:813.0px;width:113.0px;height:22.0px;line-height:18.0px;"></div>
<div class="cb gd" style="left:195.0px;top:813.0px;width:197.0px;height:22.0px"><div class="y" style="line-height:14.8px"></div><svg viewBox="0 0 9 6" style="top:7.5px"><path d="M0.5 0.8 L4.5 4.8 L8.5 0.8" fill="none" stroke="#444" stroke-width="1.1"/></svg></div>
<svg class="a" style="left:393.0px;top:814.5px" width="17.0" height="17.0" viewBox="0 0 17 17"><line x1="9.5" y1="9.5" x2="14.6" y2="14.4" stroke="#a0521e" stroke-width="2.2" stroke-linecap="round"/><line x1="8.6" y1="8.6" x2="10.4" y2="10.4" stroke="#3a2a20" stroke-width="2"/><circle cx="6" cy="6" r="4.9" fill="#e9eded" stroke="#98a6a6" stroke-width="1.3"/></svg>
<div class="box" style="left:26.5px;top:846px;width:394px;height:31.5px"></div>
<div class="gt" style="left:35.0px;top:843.0px;font-size:11.6px">Agendamento de Entrega</div>
<div class="l " style="right:1339.5px;top:855.9px;">Data</div>
<div class="f " style="left:82.0px;top:853.0px;width:76.0px;height:22.0px;line-height:18.0px;"></div>
<div class="ll " style="left:184.5px;top:856.4px;">Hora</div>
<div class="f " style="left:213.0px;top:853.0px;width:43.0px;height:22.0px;line-height:18.0px;"></div>
<div class="box" style="left:26.5px;top:884px;width:394px;height:31.5px"></div>
<div class="gt" style="left:36.0px;top:881.0px;font-size:11.6px">Agendamento de Coleta</div>
<div class="l " style="right:1339.5px;top:893.9px;">Data</div>
<div class="f " style="left:82.0px;top:891.0px;width:76.0px;height:22.0px;line-height:18.0px;"></div>
<div class="ll " style="left:184.5px;top:894.4px;">Hora</div>
<div class="f " style="left:213.0px;top:891.0px;width:43.0px;height:22.0px;line-height:18.0px;"></div>
<div class="ll " style="left:438.0px;top:771.4px;">Horário Início Coleta</div>
<div class="f " style="left:542.0px;top:767.0px;width:43.0px;height:22.0px;line-height:18.0px;">00:00</div>
<div class="ll " style="left:597.0px;top:771.4px;">Horário Limite</div>
<div class="f " style="left:668.0px;top:767.0px;width:43.0px;height:22.0px;line-height:18.0px;">00:00</div>
<div class="box" style="left:439px;top:797px;width:323px;height:123px"></div>
<div class="gt" style="left:446.0px;top:793.8px;font-size:11.3px">Solicitações de Coleta</div>
<div class="a" style="left:441px;top:806px;width:318.5px;height:112.5px;border:1px solid #a3a3a3;background:#fff"></div>
<div class="hl" style="left:442px;top:826px;width:298px;background:#dedede"></div>
<div class="hl" style="left:442px;top:845px;width:298px;background:#dedede"></div>
<div class="vl" style="left:455px;top:807px;height:39px;background:#dedede"></div>
<div class="vl" style="left:571px;top:807px;height:39px;background:#dedede"></div>
<div class="vl" style="left:739px;top:807px;height:39px;background:#dedede"></div>
<div class="a" style="left:458px;top:810.4px;height:14px;line-height:14px">Ident. Coleta</div>
<div class="a" style="left:574px;top:810.4px;height:14px;line-height:14px">Nr. Pedido</div>
<svg class="a" style="left:445.5px;top:830px" width="6" height="11" viewBox="0 0 6 11"><path d="M0 0 L6 5.5 L0 11 Z" fill="#000"/></svg>
<div class="a" style="left:443px;top:900.5px;width:314.5px;height:16px;background:#f0f0f0"></div>
<div class="a" style="left:460px;top:900.5px;width:17px;height:16px;background:#cdcdcd"></div>
<svg class="a" style="left:447.5px;top:904px" width="6" height="9" viewBox="0 0 6 9"><path d="M4.8 1.2 L1.5 4.5 L4.8 7.8" fill="none" stroke="#3a3a3a" stroke-width="1.8"/></svg>
<svg class="a" style="left:746.5px;top:904px" width="6" height="9" viewBox="0 0 6 9"><path d="M1.2 1.2 L4.5 4.5 L1.2 7.8" fill="none" stroke="#3a3a3a" stroke-width="1.8"/></svg>
<div class="hl" style="left:0px;top:936.5px;width:1419px;background:#dcdcdc"></div>
<div class="hl" style="left:0px;top:945px;width:1419px;background:#dcdcdc"></div>
<div class="gt" style="left:5.5px;top:942.0px;font-size:11.3px">Notas Fiscais</div>
<svg class="a" style="left:87.6px;top:950.5px" width="22.4" height="22.4" viewBox="0 0 24 24"><circle cx="12" cy="12" r="12" fill="#2d8b2d"/><path d="M12 5.5 V18.5 M5.5 12 H18.5" stroke="#fff" stroke-width="3.2"/></svg>
<svg class="a" style="left:115.7px;top:950.5px" width="22.4" height="22.4" viewBox="0 0 24 24"><circle cx="12" cy="12" r="12" fill="#666"/><path d="M5.6 18.6 L6.6 14.6 L14.9 6.3 L17.9 9.3 L9.6 17.6 Z" fill="#fff"/><path d="M15.7 5.5 L17 4.2 L20 7.2 L18.7 8.5 Z" fill="#fff"/></svg>
<svg class="a" style="left:143.8px;top:950.5px" width="22.4" height="22.4" viewBox="0 0 24 24"><circle cx="12" cy="12" r="12" fill="#666"/><path d="M5.5 12 H18.5" stroke="#fff" stroke-width="3.2"/></svg>
<svg class="a" style="left:187.8px;top:950.5px" width="22.4" height="22.4" viewBox="0 0 24 24"><circle cx="12" cy="12" r="12" fill="#5a5a5a"/><path d="M6 12.5 L10.2 16.5 L18.3 7.8" fill="none" stroke="#fff" stroke-width="3.2"/></svg>
<svg class="a" style="left:215.8px;top:950.5px" width="22.4" height="22.4" viewBox="0 0 24 24"><circle cx="12" cy="12" r="12" fill="#5a5a5a"/><path d="M6.8 6.8 L17.2 17.2 M17.2 6.8 L6.8 17.2" stroke="#fff" stroke-width="3.8"/></svg>
<div class="btn" style="left:432px;top:953px;width:136px;height:21px"></div>
<div class="btn" style="left:572px;top:953px;width:136.5px;height:21px"></div>
<div class="a" style="left:460.5px;top:956.5px;height:14px;line-height:14px;font-size:10.5px">Nota Fiscal Completa</div>
<div class="a" style="left:601px;top:956.5px;height:14px;line-height:14px;font-size:10.9px">Buscar de uma Lista</div>
<svg class="a" style="left:439px;top:954.5px" width="19" height="18" viewBox="0 0 19 18"><g stroke="#e8e000" stroke-width="1.4"><path d="M2 2 L6 6 M2 16 L6 12 M17 2 L13 6 M17 16 L13 12"/></g><path d="M5.5 2.5 H11 L13.5 5 V15.5 H5.5 Z" fill="#fff" stroke="#222" stroke-width="1.1"/><path d="M7.5 7 H11.5 M7.5 9.5 H11.5 M7.5 12 H11.5" stroke="#222" stroke-width="1"/></svg>
<svg class="a" style="left:581px;top:956.3px" width="18" height="17" viewBox="0 0 18 17"><path d="M2 3.5 H8" stroke="#1010d0" stroke-width="1.8"/><path d="M7 0.5 L11 3.5 L7 6.5 Z" fill="#1010d0"/><path d="M2.5 11.5 H8.5 M5.5 8.5 V14.5" stroke="#e00000" stroke-width="2"/><rect x="14" y="1" width="2.2" height="2.6" fill="#111"/><rect x="14" y="5" width="2.2" height="2.6" fill="#111"/><rect x="14" y="9" width="2.2" height="2.6" fill="#111"/><rect x="14" y="13" width="2.2" height="2.6" fill="#111"/><rect x="12" y="3.2" width="1.6" height="1.8" fill="#e00000"/></svg>
<div class="l " style="right:1339.5px;top:984.9px;">Remetente</div>
<div class="f " style="left:82.0px;top:982.0px;width:113.0px;height:22.0px;line-height:18.0px;"></div>
<div class="cb " style="left:195.0px;top:982.0px;width:230.0px;height:22.0px"><div class="y" style="line-height:14.8px"></div><svg viewBox="0 0 9 6" style="top:7.5px"><path d="M0.5 0.8 L4.5 4.8 L8.5 0.8" fill="none" stroke="#444" stroke-width="1.1"/></svg></div>
<svg class="a" style="left:428.0px;top:984.5px" width="17.0" height="17.0" viewBox="0 0 17 17"><line x1="9.5" y1="9.5" x2="14.6" y2="14.4" stroke="#a0521e" stroke-width="2.2" stroke-linecap="round"/><line x1="8.6" y1="8.6" x2="10.4" y2="10.4" stroke="#3a2a20" stroke-width="2"/><circle cx="6" cy="6" r="4.9" fill="#e9eded" stroke="#98a6a6" stroke-width="1.3"/></svg>
<div class="a" style="left:0;top:1003.6px;width:1419px;height:1.4px;background:#5f7285"></div></body></html>
